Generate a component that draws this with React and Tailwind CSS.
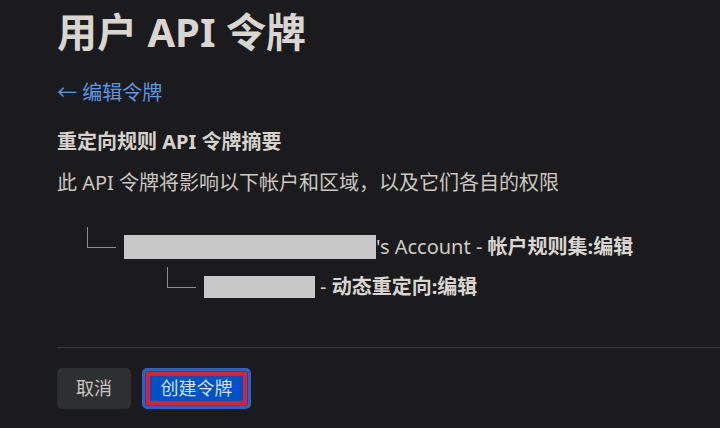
import React from 'react';

const font = { fontFamily: '"Noto Sans", "Noto Sans CJK SC", sans-serif' };

const TreeRow = ({ indent, boxW, boxH, children }) => (
  <div className={`flex items-center h-[40px] ${indent}`}>
    <div className="self-start h-[21px] w-[29px] border-l border-b border-[#8c8c8c]" />
    <div className={`ml-[8px] bg-[#c8c8c8] ${boxW} ${boxH}`} />
    <span className="text-[20px] text-[#cfcbc6] whitespace-nowrap">{children}</span>
  </div>
);

export default function App() {
  return (
    <div
      className="min-h-screen w-[720px] h-[428px] overflow-hidden bg-[#1b1b1d] pl-[57px]"
      style={font}
    >
      <h1 className="mt-[8px] text-[40px] leading-[48px] font-bold text-[#d9d5d0]">
        用户 API 令牌
      </h1>
      <a className="mt-[23px] block text-[20px] leading-[28px] text-[#5b98e4]">
        ← 编辑令牌
      </a>
      <h2 className="mt-[21px] text-[20px] leading-[28px] font-bold text-[#d6d2cd]">
        重定向规则 API 令牌摘要
      </h2>
      <p className="mt-[13px] text-[20px] leading-[28px] text-[#cbc7c2]">
        此 API 令牌将影响以下帐户和区域，以及它们各自的权限
      </p>

      <div className="mt-[30px]">
        <TreeRow indent="pl-[30px]" boxW="w-[252px]" boxH="h-[24px]">
          's Account - <span className="font-bold text-[#d9d5d0]">帐户规则集:编辑</span>
        </TreeRow>
        <TreeRow indent="pl-[110px]" boxW="w-[111px]" boxH="h-[22px]">
          <span className="ml-[5px]">- </span>
          <span className="font-bold text-[#d9d5d0]">动态重定向:编辑</span>
        </TreeRow>
      </div>

      <div className="mt-[40px] border-t border-[#3a3a3c]" />

      <div className="mt-[20px] flex gap-[11px]">
        <button className="h-[41px] w-[74px] rounded-[5px] bg-[#2e2f31] text-[18px] text-[#c9c5c0]">
          取消
        </button>
        <button className="h-[41px] w-[109px] rounded-[5px] border-[3px] border-[#2a63c6] bg-[#0051c3] p-[1px]">
          <span className="flex h-full w-full items-center justify-center border-[4px] border-[#e41e2e] text-[18px] text-[#d3e2ff]">
            创建令牌
          </span>
        </button>
      </div>
    </div>
  );
}
